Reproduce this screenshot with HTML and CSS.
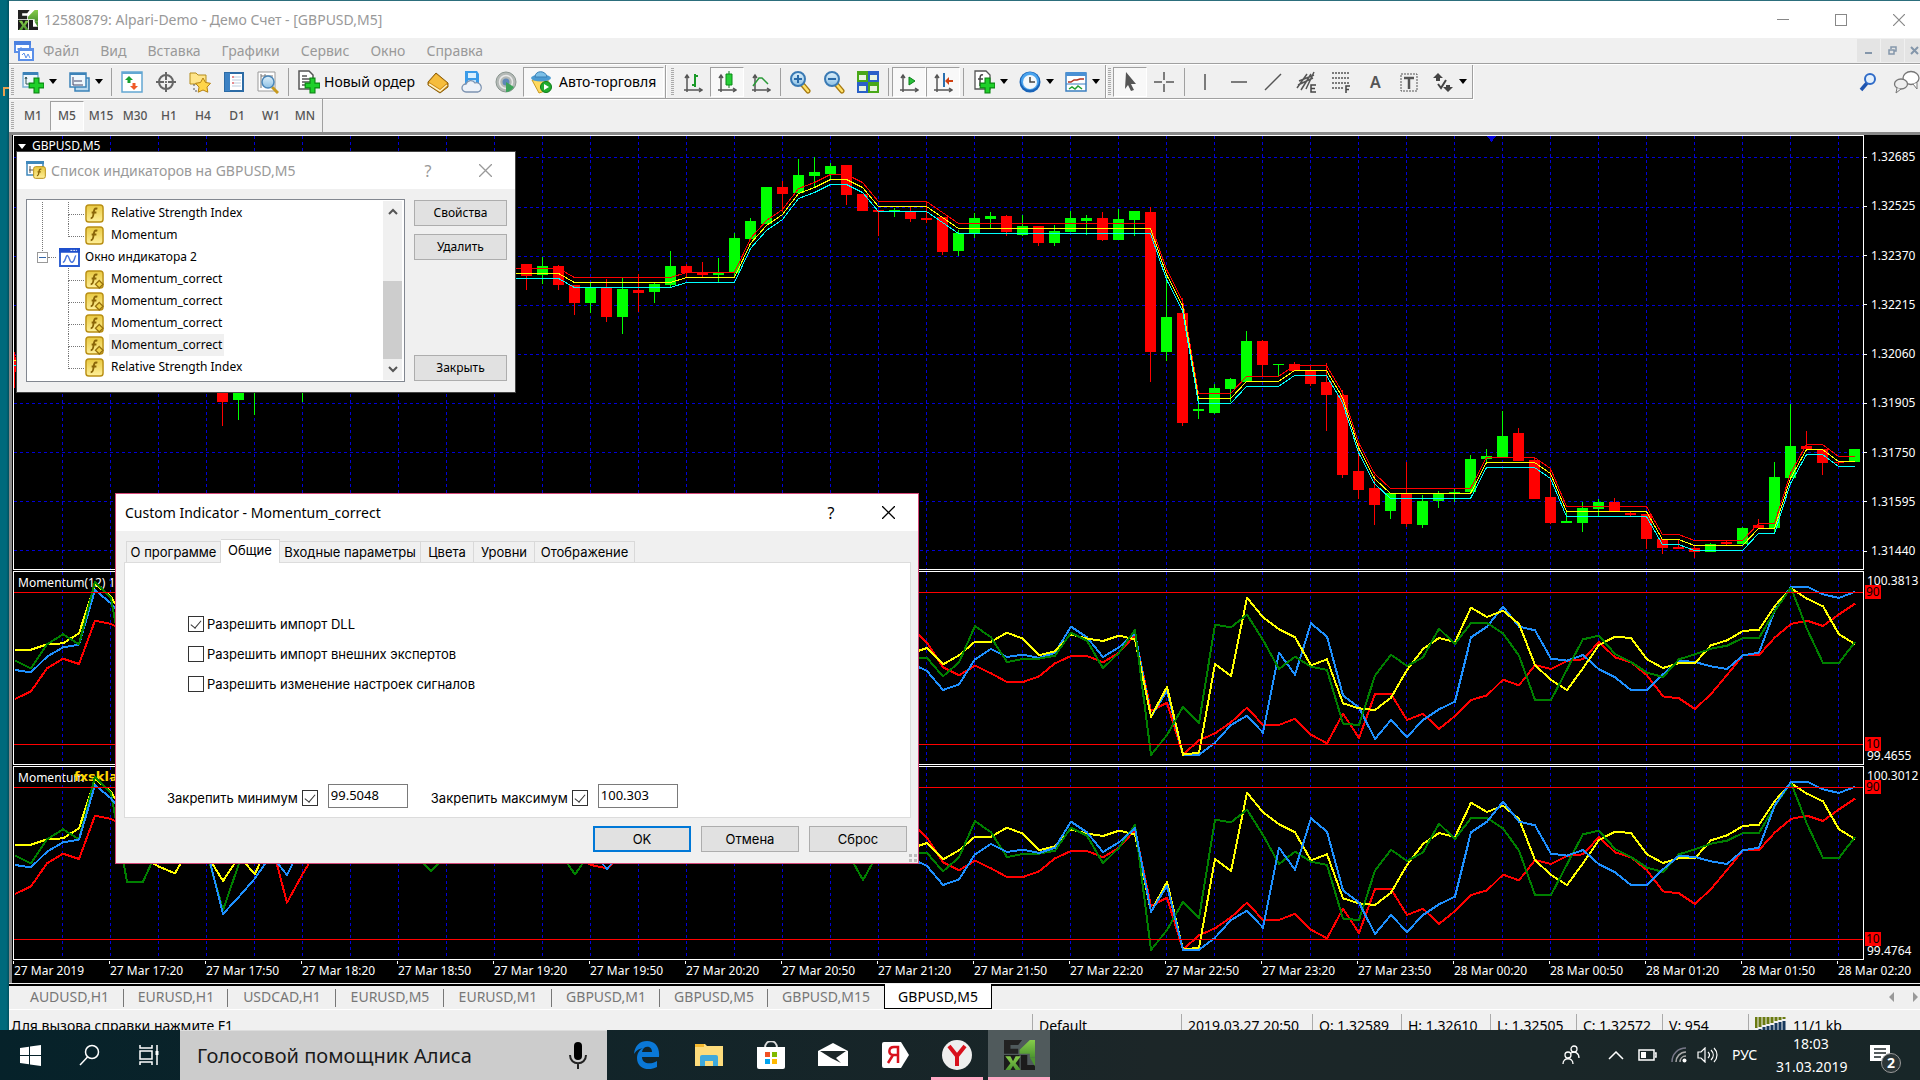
FILE: index.html
```html
<!DOCTYPE html>
<html lang="ru">
<head>
<meta charset="utf-8">
<title>12580879: Alpari-Demo - Демо Счет - [GBPUSD,M5]</title>
<link rel="stylesheet" href="styles.css">
</head>
<body>
<svg class="defs" aria-hidden="true">
  <linearGradient id="gold" x1="0" y1="0" x2="0" y2="1"><stop offset="0" stop-color="#e8c840"/><stop offset="1" stop-color="#fff09a"/></linearGradient>
  <linearGradient id="blue" x1="0" y1="0" x2="0" y2="1"><stop offset="0" stop-color="#dff1fb"/><stop offset="1" stop-color="#8cc0e4"/></linearGradient>
  <linearGradient id="leaf" x1="0" y1="0" x2="0" y2="1"><stop offset="0" stop-color="#86cc4a"/><stop offset="1" stop-color="#4c9430"/></linearGradient>
  <symbol id="plus" viewBox="0 0 14 14"><path d="M5 1h4v4h4v4H9v4H5V9H1V5h4z" fill="#1fd02a" stroke="#0a8a12"/></symbol>
  <symbol id="axes" viewBox="0 0 20 20"><path d="M4 3v14h15M1 17h3v2M2 5l2-3 2 3M16 15l3 2-3 2" fill="none" stroke="#555" stroke-width="1.5"/></symbol>
  <symbol id="f" viewBox="0 0 20 20"><rect x="1" y="1" width="18" height="18" rx="3" fill="url(#gold)" stroke="#b98f14" stroke-width="1.5"/><path d="M13 5c-3-1-3.500 1-4 5s-1 5-3 5M7 9h5" fill="none" stroke="#8a6508" stroke-width="2"/></symbol>
  <symbol id="fc" viewBox="0 0 20 20"><use href="#f"/><path d="M15 11l4 4-4 4-4-4z" fill="#f0d24a" stroke="#96700c" stroke-width="1.300"/></symbol>
  <symbol id="xl" viewBox="0 0 24 24" preserveAspectRatio="none"><path d="M0 0h14l-3 4H5v3h6v4H0z" fill="#222"/><path d="M0 12h12v12H0z" fill="#1b1b1b"/><path d="M20 0h4v14h-4v-3h-8V8z" fill="url(#leaf)"/><path d="M1 13h4l2 4 2-4h4l-4 5.500 4 5.500H9l-2-3.500L5 24H1l4-5.500z" fill="url(#leaf)"/><path d="M13 12h5v8h6v4H13z" fill="#1b1b1b"/><path d="M20 14h4v7z" fill="#4c9430"/></symbol>
  <symbol id="lens" viewBox="0 0 22 24"><path d="M13 14l6 7" stroke="#a87a10" stroke-width="5" stroke-linecap="round"/><path d="M14 15l5 6" stroke="#ffe26a" stroke-width="2.500" stroke-linecap="round"/><circle cx="9" cy="9" r="7" fill="url(#blue)" stroke="#3a7ab4" stroke-width="2"/></symbol>
  <symbol id="close" viewBox="0 0 12 12"><path d="M0 0l12 12M12 0L0 12" fill="none" stroke="currentColor" stroke-width="1.200"/></symbol>
</svg>

<div class="screen">
  <aside class="desktop"><svg width="6" height="9" viewBox="0 0 6 9"><path d="M1 9V1h5" fill="none" stroke="#e8a050" stroke-width="2"/></svg></aside>
  <div class="window">
    <header class="titlebar">
      <svg class="i-app"><use href="#xl"/></svg>
      <h1>12580879: Alpari-Demo - Демо Счет - [GBPUSD,M5]</h1>
      <div class="win-controls">
        <button aria-label="Свернуть"><svg width="12" height="12"><path d="M0 5.500h12" stroke="#888"/></svg></button>
        <button aria-label="Развернуть"><svg width="12" height="12"><rect x=".5" y=".5" width="11" height="11" fill="none" stroke="#888"/></svg></button>
        <button aria-label="Закрыть"><svg width="12" height="12"><use href="#close"/></svg></button>
      </div>
    </header>

    <nav class="menubar">
      <svg width="20" height="20" viewBox="0 0 20 20"><path d="M1 1h15v10H1z" fill="#fff" stroke="#5b8fe8" stroke-width="2"/><path d="M0 0h17v4H0z" fill="#4a80e0"/><path d="M4 7v2m3-3v3m3-2v2" stroke="#5b8fe8"/><path d="M5 8h14v11H5z" fill="#fff" stroke="#5b8fe8" stroke-width="2"/><path d="M4 7h16v3H4z" fill="#5b8fe8"/><path d="M8 14l2-2 2 5 2-4 2 4" fill="none" stroke="#5b8fe8"/></svg>
      <a href="#">Файл</a><a href="#">Вид</a><a href="#">Вставка</a><a href="#">Графики</a><a href="#">Сервис</a><a href="#">Окно</a><a href="#">Справка</a>
      <div class="mdi">
        <button aria-label="Свернуть график"><svg width="9" height="9"><path d="M1 7h7" stroke="#8496aa" stroke-width="2"/></svg></button>
        <button aria-label="Восстановить график"><svg width="9" height="9"><path d="M3 3V1h5v4H6M1 4h5v4H1z" fill="none" stroke="#8496aa" stroke-width="1.500"/></svg></button>
        <button aria-label="Закрыть график"><svg width="9" height="9"><path d="M1 1l7 7M8 1L1 8" stroke="#8496aa" stroke-width="2"/></svg></button>
      </div>
    </nav>

    <div class="toolbar">
      <div class="group">
        <span class="grip"></span>
        <button class="dd" aria-label="Новый график"><svg class="ic" viewBox="0 0 22 24"><path d="M1 3h15v14H1z" fill="#eef6fc" stroke="#7fb2d6" stroke-width="1.500"/><path d="M1 2h15v3H1z" fill="#3b82b8"/><path d="M4 7v7h8M3 9l1-2 1 2" fill="none" stroke="#355"/><use href="#plus" x="6" y="7" width="17" height="17"/></svg><i></i></button>
        <button class="dd" aria-label="Профили"><svg class="ic" viewBox="0 0 22 24"><path d="M7 8h14v13H7z" fill="#b9d8ee" stroke="#3b82b8" stroke-width="1.500"/><path d="M2 3h16v14H2z" fill="#eef6fc" stroke="#3b82b8" stroke-width="1.500"/><path d="M2 3h16v2H2z" fill="#3b82b8"/><path d="M5 7v8h10M6 11h8" fill="none" stroke="#446"/></svg><i></i></button>
        <span class="sep"></span>
        <button aria-label="Обзор рынка"><svg class="ic" viewBox="0 0 22 24"><rect x="1" y="2" width="20" height="20" fill="#fff" stroke="#63a7d2" stroke-width="1.500"/><path d="M1 2h20v2H1z" fill="#63a7d2"/><path d="M8 6l4 4H9.500v3h-3v-3H4z" fill="#18a030"/><path d="M13 20l4-4h-2.500v-3h-3v3H9z" fill="#f05a28"/></svg></button>
        <button aria-label="Навигатор"><svg class="ic" viewBox="0 0 22 24"><circle cx="11" cy="12" r="7" fill="none" stroke="#666" stroke-width="2"/><path d="M11 2v8m0 4v8M1 12h8m4 0h8" stroke="#666" stroke-width="2"/><circle cx="11" cy="12" r="1" fill="#555"/></svg></button>
        <button aria-label="Избранное"><svg class="ic" viewBox="0 0 22 24"><path d="M1 3h6l2 2h8v9H1z" fill="#ffe58a" stroke="#b58d1c"/><path d="M5 14v7h4" fill="none" stroke="#555" stroke-dasharray="2 2"/><path d="M14 8l2.500 4.500 5 .8-3.500 3.800.8 5.100L14 20l-4.800 2.200.8-5.100-3.500-3.800 5-.8z" fill="#ffd54a" stroke="#b58213"/></svg></button>
        <button aria-label="Терминал"><svg class="ic" viewBox="0 0 22 24"><rect x="2" y="3" width="18" height="18" fill="#fff" stroke="#2c6ba5" stroke-width="2"/><path d="M2 3h5v18H2z" fill="#3d82c4"/><path d="M9 7h9M9 10h9M9 13h9M9 16h9" stroke="#bcd"/><path d="M9 7h2M9 13h2" stroke="#e33"/></svg></button>
        <button aria-label="Тестер"><svg class="ic" viewBox="0 0 22 24"><path d="M1 2h17v19H1z" fill="#fff" stroke="#999"/><path d="M4 4v14M4 6h12M8 4v6" stroke="#777"/><path d="M15 17l6 6" stroke="#c79a20" stroke-width="3"/><circle cx="11" cy="12" r="6" fill="url(#blue)" stroke="#4a86b8" stroke-width="1.500"/></svg></button>
        <span class="sep"></span>
        <button class="wide"><svg class="ic" viewBox="0 0 22 24"><path d="M1 1h10l4 4v14H1z" fill="#fff" stroke="#555" stroke-width="1.500"/><path d="M4 6h5M4 9h8M4 12h8M4 15h4" stroke="#555" stroke-width="1.500"/><use href="#plus" x="6" y="7" width="17" height="17"/></svg>Новый ордер</button>
        <button aria-label="MetaEditor"><svg class="ic" viewBox="0 0 22 24"><path d="M1 12L9 3l12 10v4l-8 6L1 15z" fill="#c98612" stroke="#8a5e0c"/><path d="M9 4l11 9-7 6L2 12z" fill="#f6bd3c"/><path d="M2 14l11 7 7-6" fill="none" stroke="#fff3c4" stroke-width="1.500"/></svg></button>
        <button aria-label="Облако"><svg class="ic" viewBox="0 0 22 24"><path d="M4 1h12l2 3v11H4z" fill="#3a9be8"/><path d="M7 3h8v5H7z" fill="#d9f0ff"/><path d="M7 10h8v5H7z" fill="#bfe2fa"/><path d="M5 22a4 4 0 010-8 5 5 0 019-1 4 4 0 013 9z" fill="#eef2f8" stroke="#7d93b0" stroke-width="1.300"/></svg></button>
        <button aria-label="Сигналы"><svg class="ic" viewBox="0 0 22 24"><circle cx="11" cy="12" r="10" fill="#b4b9b6" stroke="#8a9690"/><circle cx="11" cy="12" r="6.500" fill="none" stroke="#e8e8e8" stroke-width="1.500"/><circle cx="11" cy="12" r="3.500" fill="#5f88b8"/><path d="M11 12v10a10 10 0 008-5" fill="#3da35a"/></svg></button>
        <button class="wide on"><svg class="ic" viewBox="0 0 22 24"><path d="M2 10l7 13 9-3V9z" fill="#ffd95e" stroke="#c89a20"/><ellipse cx="11" cy="8" rx="10" ry="3.500" fill="#4b9bd2"/><path d="M5 7c0-7 11-7 12 0z" fill="#7cc0e8" stroke="#3a80b4"/><circle cx="16" cy="17" r="5.500" fill="#21ad2e" stroke="#0c7a18"/><path d="M14 14l5 3-5 3z" fill="#fff"/></svg>Авто-торговля</button>
      </div>
      <div class="group">
        <span class="grip"></span>
        <button aria-label="Бары"><svg class="ic" viewBox="0 0 22 24"><use href="#axes" x="1" y="3" width="20" height="20"/><path d="M13 4v13M13 6h3M10 15h3" stroke="#1a9a28" stroke-width="2"/></svg></button>
        <button class="on" aria-label="Свечи"><svg class="ic" viewBox="0 0 22 24"><use href="#axes" x="1" y="3" width="20" height="20"/><path d="M13 1v17" stroke="#0a7a18"/><path d="M10 4h6v11h-6z" fill="#28d038" stroke="#0a8a18"/></svg></button>
        <button aria-label="Линия"><svg class="ic" viewBox="0 0 22 24"><use href="#axes" x="1" y="3" width="20" height="20"/><path d="M3 16l6-8h3l6 6" fill="none" stroke="#2a9a38" stroke-width="1.500"/></svg></button>
        <span class="sep slim"></span>
        <button aria-label="Приблизить"><svg class="ic" viewBox="0 0 22 24"><use href="#lens"/><path d="M9 5v8M5 9h8" stroke="#2a6aa8" stroke-width="2"/></svg></button>
        <button aria-label="Отдалить"><svg class="ic" viewBox="0 0 22 24"><use href="#lens"/><path d="M5 9h8" stroke="#2a6aa8" stroke-width="2"/></svg></button>
        <button aria-label="Плитка"><svg class="ic" viewBox="0 0 22 24"><path d="M0 1h11v11H0zM11 12h11v11H11z" fill="#49a818"/><path d="M11 1h11v11H11zM0 12h11v11H0z" fill="#2a60c8"/><path d="M2 5h7v5H2zM13 5h7v5h-7zM2 16h7v5H2zM13 16h7v5h-7z" fill="#e8f4e0"/></svg></button>
        <span class="sep"></span>
        <button class="on" aria-label="Автопрокрутка"><svg class="ic" viewBox="0 0 22 24"><use href="#axes" x="1" y="3" width="20" height="20"/><path d="M11 7l6 4-6 4z" fill="#28c038" stroke="#0a8018"/></svg></button>
        <button class="on" aria-label="Сдвиг"><svg class="ic" viewBox="0 0 22 24"><use href="#axes" x="1" y="3" width="20" height="20"/><path d="M12 3v14" stroke="#2a70b0" stroke-width="2"/><path d="M13 11l4-4v3h4v2h-4v3z" fill="#d04010"/></svg></button>
        <span class="sep"></span>
        <button class="dd" aria-label="Индикаторы"><svg class="ic" viewBox="0 0 22 24"><path d="M2 1h11l4 4v14H2z" fill="#fff" stroke="#555" stroke-width="1.300"/><path d="M10 5c-3-1-3 2-3 5v6M5 9h5" fill="none" stroke="#444" stroke-width="1.500"/><use href="#plus" x="6" y="7" width="17" height="17"/></svg><i></i></button>
        <button class="dd" aria-label="Периоды"><svg class="ic" viewBox="0 0 22 24"><circle cx="11" cy="12" r="10.500" fill="#1a64b8"/><circle cx="11" cy="11" r="9" fill="#4aa4ee"/><circle cx="11" cy="12" r="7" fill="#f4f8fb"/><path d="M11 7v5h5" fill="none" stroke="#444" stroke-width="1.500"/></svg><i></i></button>
        <button class="dd" aria-label="Шаблоны"><svg class="ic" viewBox="0 0 22 24"><path d="M1 3h20v18H1z" fill="#fff" stroke="#3b7fc0" stroke-width="1.500"/><path d="M1 2h20v4H1z" fill="#4a90d4"/><path d="M3 12h3l3-2h3l3-1h4" fill="none" stroke="#b03020" stroke-width="1.500"/><path d="M1 14h20" stroke="#3b7fc0"/><path d="M4 19l3-2 3 2 3-3 4 3" fill="none" stroke="#20a030" stroke-width="1.500"/></svg><i></i></button>
      </div>
      <div class="group tight">
        <span class="grip"></span>
        <button class="on" aria-label="Курсор"><svg class="ic" viewBox="0 0 22 24"><path d="M7 2l10 12h-5l3 6-3 1-3-6-3 4z" fill="#555"/></svg></button>
        <button aria-label="Перекрестие"><svg class="ic" viewBox="0 0 22 24"><path d="M11 2v8m0 4v8M1 12h8m4 0h8" stroke="#555" stroke-width="1.500"/></svg></button>
        <span class="sep"></span>
        <button aria-label="Вертикальная линия"><svg class="ic" viewBox="0 0 22 24"><path d="M11 4v16" stroke="#555" stroke-width="1.500"/></svg></button>
        <button aria-label="Горизонтальная линия"><svg class="ic" viewBox="0 0 22 24"><path d="M3 12h16" stroke="#555" stroke-width="1.500"/></svg></button>
        <button aria-label="Трендовая линия"><svg class="ic" viewBox="0 0 22 24"><path d="M3 20L19 4" stroke="#555" stroke-width="1.500"/></svg></button>
        <button aria-label="Канал"><svg class="ic" viewBox="0 0 22 24"><path d="M1 18L11 4M5 20L15 4M10 19L18 2M2 15l15-7M3 11l15-6" stroke="#555" stroke-width="1.500"/><path d="M20 15h-5v7h5M15 18.500h4" fill="none" stroke="#444" stroke-width="1.500"/></svg></button>
        <button aria-label="Фибоначчи"><svg class="ic" viewBox="0 0 22 24"><path d="M2 3h17M2 8h17M2 13h17M2 18h11" stroke="#555" stroke-width="1.500" stroke-dasharray="2 1"/><path d="M20 16h-4v7M16 19.500h3" fill="none" stroke="#444" stroke-width="1.500"/></svg></button>
        <button aria-label="Текст" class="glyph">A</button>
        <button aria-label="Метка"><svg class="ic" viewBox="0 0 22 24"><rect x="3" y="4" width="16" height="17" fill="none" stroke="#555" stroke-dasharray="2 1"/><path d="M6 8h10M11 8v11" stroke="#555" stroke-width="2.500"/></svg></button>
        <button class="dd" aria-label="Стрелки"><svg class="ic" viewBox="0 0 22 24"><path d="M6 3l5 5H8v3H4V8H1zM16 22l-5-5h3v-2h4v2h3z" fill="#444"/><path d="M6 14l3 4 5-8" fill="none" stroke="#444" stroke-width="2"/></svg><i></i></button>
      </div>
      <div class="tools-right">
        <button aria-label="Поиск"><svg width="18" height="20" viewBox="0 0 18 20"><path d="M8 11l-6 7" stroke="#1f55b0" stroke-width="3.500"/><circle cx="11" cy="7" r="5" fill="#e4f0fc" stroke="#2f6bc8" stroke-width="2"/></svg></button>
        <button aria-label="Чат"><svg width="27" height="24" viewBox="0 0 27 24"><ellipse cx="18" cy="8" rx="8" ry="6.500" fill="#fff" stroke="#777" stroke-width="1.300"/><path d="M20 14l4 5v-6" fill="#fff" stroke="#777"/><ellipse cx="8" cy="14" rx="6.500" ry="5" fill="#eee" stroke="#777" stroke-width="1.300"/><path d="M4 18l-1 5 5-4" fill="#eee" stroke="#777"/></svg></button>
      </div>
    </div>

    <div class="timeframes">
      <span class="grip"></span>
      <button>M1</button><button class="on">M5</button><button>M15</button><button>M30</button><button>H1</button><button>H4</button><button>D1</button><button>W1</button><button>MN</button>
    </div>

    <main class="chart">
      <section class="pane"><svg id="price" viewBox="0 0 1849 433" preserveAspectRatio="none"></svg><span class="caption"><i></i>GBPUSD,M5</span></section>
      <div class="prices"><span>1.32685</span><span>1.32525</span><span>1.32370</span><span>1.32215</span><span>1.32060</span><span>1.31905</span><span>1.31750</span><span>1.31595</span><span>1.31440</span></div>
      <section class="pane"><span class="caption low">Momentum(12) 100.0702</span><svg id="osc1" viewBox="0 0 1849 192" preserveAspectRatio="none"></svg></section>
      <div class="scale"><span>100.3813</span><span>99.4655</span><b class="hi">90</b><b class="lo">10</b></div>
      <section class="pane"><span class="caption low">Momentum</span><strong class="mark">fxsklad</strong><svg id="osc2" viewBox="0 0 1849 192" preserveAspectRatio="none"></svg></section>
      <div class="scale"><span>100.3012</span><span>99.4764</span><b class="hi">90</b><b class="lo">10</b></div>
      <div class="dates"><span>27 Mar 2019</span><span>27 Mar 17:20</span><span>27 Mar 17:50</span><span>27 Mar 18:20</span><span>27 Mar 18:50</span><span>27 Mar 19:20</span><span>27 Mar 19:50</span><span>27 Mar 20:20</span><span>27 Mar 20:50</span><span>27 Mar 21:20</span><span>27 Mar 21:50</span><span>27 Mar 22:20</span><span>27 Mar 22:50</span><span>27 Mar 23:20</span><span>27 Mar 23:50</span><span>28 Mar 00:20</span><span>28 Mar 00:50</span><span>28 Mar 01:20</span><span>28 Mar 01:50</span><span>28 Mar 02:20</span></div>
    </main>

    <nav class="tabs">
      <a href="#">AUDUSD,H1</a><a href="#">EURUSD,H1</a><a href="#">USDCAD,H1</a><a href="#">EURUSD,M5</a><a href="#">EURUSD,M1</a><a href="#">GBPUSD,M1</a><a href="#">GBPUSD,M5</a><a href="#">GBPUSD,M15</a><a href="#" class="current">GBPUSD,M5</a>
      <svg class="scroll" width="32" height="12" viewBox="0 0 32 12"><path d="M6 1v10L1 6zM25 1v10l5-5z" fill="#999"/></svg>
    </nav>

    <footer class="status">
      <span class="hint">Для вызова справки нажмите F1</span><span class="c-profile">Default</span><span class="c-date">2019.03.27 20:50</span><span class="c-price">O: 1.32589</span><span class="c-price">H: 1.32610</span><span class="c-close">L: 1.32505</span><span class="c-close">C: 1.32572</span><span class="c-close">V: 954</span>
      <span class="c-net"><svg width="32" height="16" viewBox="0 0 32 16"><path d="M1 0v11M5 0v10M9 0v8M13 0v7M17 0v6M21 0v4M25 0v3M29 0v2" stroke="#6a7a10" stroke-width="3"/><path d="M1 13v3M5 12v4M9 10v6M13 9v7M17 8v8M21 6v10M25 5v11M29 4v12" stroke="#17385c" stroke-width="3"/></svg>11/1 kb</span>
    </footer>
  </div>
</div>

<footer class="taskbar">
  <button class="tb" aria-label="Пуск"><svg width="21" height="21" viewBox="0 0 21 21"><path d="M0 3l9-1.300V10H0zM10 1.500L21 0v10H10zM0 11h9v8.300L0 18zM10 11h11v10l-11-1.500z" fill="#fff"/></svg></button>
  <button class="tb" aria-label="Найти"><svg width="22" height="22" viewBox="0 0 22 22"><circle cx="13" cy="8" r="6.500" fill="none" stroke="#fff" stroke-width="1.500"/><path d="M8.500 13L1 21" stroke="#fff" stroke-width="1.500"/></svg></button>
  <button class="tb" aria-label="Представление задач"><svg width="22" height="20" viewBox="0 0 22 20"><path d="M1 0v3h12V0M1 6h12v8H1zM1 20v-3h12v3M18 0v20" fill="none" stroke="#fff" stroke-width="1.500"/><path d="M16.500 6h3v4h-3z" fill="#fff"/></svg></button>
  <label class="alice"><input type="text" aria-label="Алиса" value="Голосовой помощник Алиса"><svg width="18" height="28" viewBox="0 0 18 28"><rect x="5" y="0" width="8" height="18" rx="4" fill="#000"/><path d="M1 13c0 11 16 11 16 0M9 21v6" fill="none" stroke="#222" stroke-width="2"/></svg></label>
  <div class="apps">
    <button class="tb" aria-label="Edge"><svg width="26" height="28" viewBox="0 0 26 28"><path d="M0 13C1 4 6 0 13 0c8 0 13 6 12 16H8c0 7 9 8 15 4v6C13 31 3 27 3 17c0-4 2-8 6-10-5 1-7 3-9 6zm8-2h10c0-7-9-7-10 0z" fill="#0a78d7"/></svg></button>
    <button class="tb" aria-label="Проводник"><svg width="28" height="24" viewBox="0 0 28 24"><path d="M0 1h10l2 2h16v20H0z" fill="#fddc7c"/><path d="M0 1h9v3H0z" fill="#f5b92e"/><path d="M5 23v-9q0-2 2-2h14q2 0 2 2v9h-5v-5h-8v5z" fill="#3fa9dc"/></svg></button>
    <button class="tb" aria-label="Магазин"><svg width="30" height="28" viewBox="0 0 30 28"><path d="M9 7C9-2 21-2 21 7" fill="none" stroke="#ddd" stroke-width="2"/><path d="M1 6h28v20q0 2-2 2H3q-2 0-2-2z" fill="#fff"/><path d="M9 11h5v5H9z" fill="#f25022"/><path d="M16 11h5v5h-5z" fill="#7fba00"/><path d="M9 18h5v5H9z" fill="#00a4ef"/><path d="M16 18h5v5h-5z" fill="#ffb900"/></svg></button>
    <button class="tb" aria-label="Почта"><svg width="30" height="24" viewBox="0 0 30 24"><path d="M0 8L15 0l15 8v15H0z" fill="#fff"/><path d="M2 8h26L18 15l5 5-10-5z" fill="#1c2628"/></svg></button>
    <button class="tb" aria-label="Яндекс"><svg width="27" height="26" viewBox="0 0 27 26"><path d="M2 0h17l8 13-8 13H2q-2 0-2-2V2q0-2 2-2z" fill="#fff"/><path d="M16 21V5h-4c-6 0-6 8-1 8h4M11 13l-5 8" fill="none" stroke="#d8101c" stroke-width="2.500"/></svg></button>
    <button class="tb run" aria-label="Яндекс.Браузер"><svg width="30" height="30" viewBox="0 0 30 30"><circle cx="15" cy="15" r="15" fill="#eee"/><path d="M7 6l8 10 8-10M15 15v11" fill="none" stroke="#d8101c" stroke-width="4"/></svg></button>
    <button class="tb run active" aria-label="MetaTrader"><svg width="31" height="30"><use href="#xl"/></svg></button>
  </div>
  <div class="tray">
    <svg width="18" height="20" viewBox="0 0 18 20"><circle cx="12" cy="4" r="3" fill="none" stroke="#fff" stroke-width="1.300"/><circle cx="6" cy="10" r="3" fill="none" stroke="#fff" stroke-width="1.300"/><path d="M1 19c0-7 10-7 10 0M9 8c4-2 8 0 8 5" fill="none" stroke="#fff" stroke-width="1.300"/></svg>
    <svg width="16" height="9" viewBox="0 0 16 9"><path d="M1 8l7-7 7 7" fill="none" stroke="#fff" stroke-width="1.500"/></svg>
    <svg width="19" height="12" viewBox="0 0 19 12"><path d="M1 1h15v10H1zM17 4h1v4h-1" fill="none" stroke="#fff" stroke-width="1.500"/><path d="M3 3h5v6H3z" fill="#fff"/></svg>
    <svg width="16" height="16" viewBox="0 0 16 16"><path d="M1 15C1 7 7 1 15 1" fill="none" stroke="#778" stroke-width="1.500"/><path d="M5 15c0-5 4-10 10-10M9 15c0-3 2-6 6-6" fill="none" stroke="#aaa" stroke-width="1.500"/><circle cx="13.500" cy="13.500" r="2" fill="#fff"/></svg>
    <svg width="21" height="16" viewBox="0 0 21 16"><path d="M1 5h3l4-4v14l-4-4H1zM11 5c2 2 2 4 0 6M14 3c3 3 3 7 0 10M17 1c4 4 4 10 0 14" fill="none" stroke="#fff" stroke-width="1.200"/></svg>
    <span>РУС</span>
    <time>18:03<br>31.03.2019</time>
    <button class="notify" aria-label="Уведомления"><svg width="20" height="20" viewBox="0 0 20 20"><path d="M0 0h20v16h-4v4l-4-4H0z" fill="#fff"/><path d="M4 4h12M4 8h12M4 12h7" stroke="#1c2628" stroke-width="1.500"/></svg><b>2</b></button>
  </div>
</footer>

<section class="dialog indicators" aria-label="Список индикаторов">
  <header>
    <svg width="20" height="19" viewBox="0 0 20 19"><path d="M1 1h16v13H1z" fill="#fff" stroke="#3f88bc" stroke-width="1.500"/><path d="M0 0h18v3H0z" fill="#3f88bc"/><path d="M4 5v7M3 9h4" stroke="#555"/><use href="#f" x="7" y="5" width="13" height="13"/></svg>
    <h2>Список индикаторов на GBPUSD,M5</h2>
    <button class="help" aria-label="Справка">?</button>
    <button class="x" aria-label="Закрыть"><svg width="13" height="13"><use href="#close"/></svg></button>
  </header>
  <div class="body">
    <div class="tree">
      <ul>
        <li class="leaf"><svg><use href="#f"/></svg><span>Relative Strength Index</span></li>
        <li class="leaf last"><svg><use href="#f"/></svg><span>Momentum</span></li>
        <li class="node"><em></em><svg viewBox="0 0 22 20"><path d="M1 1h20v18H1z" fill="#fff" stroke="#2a5cd0" stroke-width="2"/><path d="M0 0h22v5H0z" fill="#1e4fcc"/><path d="M12 2.500h7" stroke="#fff" stroke-dasharray="2 1"/><path d="M4 15c3 0 3-8 5-7s2 8 5 7 2-7 4-7" fill="none" stroke="#4a76dc" stroke-width="1.500"/></svg><span>Окно индикатора 2</span></li>
        <li class="leaf"><svg><use href="#fc"/></svg><span>Momentum_correct</span></li>
        <li class="leaf"><svg><use href="#fc"/></svg><span>Momentum_correct</span></li>
        <li class="leaf"><svg><use href="#fc"/></svg><span>Momentum_correct</span></li>
        <li class="leaf sel"><svg><use href="#fc"/></svg><span>Momentum_correct</span></li>
        <li class="leaf last"><svg><use href="#f"/></svg><span>Relative Strength Index</span></li>
      </ul>
      <div class="scrollbar"><svg width="10" height="7"><path d="M1 6l4-4 4 4" fill="none" stroke="#555" stroke-width="2"/></svg><i></i><svg width="10" height="7"><path d="M1 1l4 4 4-4" fill="none" stroke="#555" stroke-width="2"/></svg></div>
    </div>
    <div class="actions"><button>Свойства</button><button>Удалить</button><button class="end">Закрыть</button></div>
  </div>
</section>

<form class="dialog custom" aria-label="Custom Indicator">
  <header>
    <h2>Custom Indicator - Momentum_correct</h2>
    <button type="button" class="help" aria-label="Справка">?</button>
    <button type="button" class="x" aria-label="Закрыть"><svg width="13" height="13"><use href="#close"/></svg></button>
  </header>
  <div class="body">
    <div class="tabset"><button type="button">О программе</button><button type="button" class="current">Общие</button><button type="button">Входные параметры</button><button type="button">Цвета</button><button type="button">Уровни</button><button type="button">Отображение</button></div>
    <div class="panel">
      <label><input type="checkbox" checked>Разрешить импорт DLL</label>
      <label><input type="checkbox">Разрешить импорт внешних экспертов</label>
      <label><input type="checkbox">Разрешить изменение настроек сигналов</label>
      <div class="limits">
        <label>Закрепить минимум<input type="checkbox" checked></label><input type="text" aria-label="Минимум" value="99.5048">
        <label>Закрепить максимум<input type="checkbox" checked></label><input type="text" aria-label="Максимум" value="100.303">
      </div>
    </div>
    <div class="buttons"><button type="button" class="ok">OK</button><button type="button">Отмена</button><button type="button">Сброс</button></div>
  </div>
  <svg class="resize" width="8" height="8"><path d="M0 0h3v3H0zM5 0h3v3H5zM0 5h3v3H0zM5 5h3v3H5z" fill="#bbb"/></svg>
</form>
<script src="chart.js"></script>
</body>
</html>
```
FILE: styles.css
```css
* { box-sizing: border-box; }
body { margin: 0; height: 100vh; display: flex; flex-direction: column; overflow: hidden; position: relative; background: #006a7c; font: 14px/20px "Noto Sans", "Open Sans", sans-serif; color: #000; }
button { font: inherit; color: inherit; background: none; border: 0; padding: 0; margin: 0; }
a { color: inherit; text-decoration: none; }
h1, h2 { margin: 0; font-size: 14px; font-weight: 400; }
svg { display: block; flex: none; }
.defs { position: absolute; width: 0; height: 0; }

.screen { flex: 1; min-height: 0; display: flex; }
.desktop { width: 9px; padding: 87px 0 0 3px; background: linear-gradient(90deg, #006a7c 70%, #00505e); }
.window { flex: 1; min-width: 0; display: flex; flex-direction: column; background: #f0f0f0; border-top: 1px solid #2c6e7c; }

.titlebar { height: 37px; flex: none; display: flex; align-items: center; padding-left: 9px; background: #fff; color: #999; }
.i-app { width: 20px; height: 20px; margin-right: 6px; }
.win-controls { margin-left: auto; display: flex; margin-right: -8px; color: #888; }
.win-controls button { width: 58px; height: 37px; display: grid; place-items: center; }

.menubar { height: 26px; flex: none; display: flex; align-items: center; gap: 21px; padding-left: 5px; border-bottom: 1px solid #a0a0a0; color: #999; }
.menubar > svg { margin-right: -12px; }
.mdi { margin-left: auto; display: flex; gap: 1px; align-self: stretch; padding: 1px 0; }
.mdi button { width: 23px; background: #e4e4e4; display: grid; place-items: center; }
.mdi button:last-child { width: 15px; padding-left: 4px; overflow: hidden; }

.toolbar { height: 35px; flex: none; display: flex; border-top: 1px solid #fff; }
.group { display: flex; align-items: center; padding: 0 1px; border-right: 1px solid #a0a0a0; border-bottom: 1px solid #a0a0a0; box-shadow: 1px 1px #fff; }
.group + .group { padding-left: 4px; padding-right: 0; }
.group + .tight { padding-left: 1px; }
.grip { width: 3px; height: 28px; margin: 0 2px 0 1px; background: repeating-linear-gradient(#aaa 0 1px, #f0f0f0 1px 2px); }
.group button { width: 34px; height: 30px; display: flex; align-items: center; justify-content: center; }
.group button.dd { width: 46px; gap: 5px; }
.group button.wide { width: auto; padding: 0 6px; gap: 4px; }
.group button.wide.on { padding: 0 7px 0 6px; gap: 7px; }
.group button.on, .timeframes .on { background: #f8f8f8; border: 1px solid #fff; border-top-color: #a0a0a0; border-left-color: #a0a0a0; }
.ic { width: 22px; height: 24px; }
.dd i { width: 0; height: 0; border: 4px solid transparent; border-top: 5px solid #000; border-bottom: 0; }
.sep { width: 1px; height: 28px; margin: 0 3px; background: #a0a0a0; }
.sep.slim { margin: 0 2px; }
.group .glyph { font-size: 16px; font-weight: 600; color: #555; }
.tools-right { margin-left: auto; display: flex; align-items: center; gap: 16px; }

.timeframes { height: 33px; flex: none; display: flex; align-items: center; width: 314px; padding-left: 1px; border-right: 1px solid #a0a0a0; font-size: 12px; font-weight: 500; color: #555; }
.timeframes button { width: 34px; height: 30px; flex: none; }

.chart { flex: 1; min-height: 0; display: grid; grid-template-columns: minmax(0, 1fr) 56px; grid-template-rows: 435fr 194fr 194fr 22px; row-gap: 1px; padding-left: 1px; background: #000; border: solid #888; border-width: 3px 0 0 3px; color: #fff; font-size: 12px; line-height: 18px; }
.pane { position: relative; min-height: 0; border: 1px solid #fff; overflow: hidden; }
.pane svg { width: 100%; height: 100%; position: relative; shape-rendering: crispEdges; }
.caption { position: absolute; left: 4px; top: 1px; display: flex; align-items: center; gap: 6px; }
.caption.low { top: 2px; }
.caption i { border: 4px solid transparent; border-top: 5px solid #fff; border-bottom: 0; }
.mark { position: absolute; left: 60px; top: 1px; font: bold 13px/18px "DejaVu Sans", sans-serif; color: #ffd700; }
.prices { display: flex; flex-direction: column; justify-content: space-between; padding: 13px 0 10px; }
.prices span { display: flex; align-items: center; gap: 4px; }
.prices span::before { content: ""; width: 3px; height: 1px; background: #fff; }
.scale { position: relative; display: flex; flex-direction: column; justify-content: space-between; padding: 1px 0 0 3px; overflow: hidden; }
.scale b { position: absolute; left: 1px; padding: 0 1px; background: #f00; color: #000; font-weight: 400; line-height: 14px; }
.hi { top: 7%; }
.lo { bottom: 7%; }
.dates { grid-column: 1 / -1; display: flex; overflow: hidden; }
.dates span { flex: 0 0 96px; height: 3px; border-left: 1px solid #fff; line-height: 20px; white-space: nowrap; }

.tabs { height: 26px; flex: none; margin-top: 1px; display: flex; border-top: 2px solid #000; border-bottom: 1px solid #fff; color: #777; font-size: 14px; line-height: 22px; }
.tabs a { width: 108px; text-align: center; background: linear-gradient(#777, #777) right center / 1px 18px no-repeat; }
.tabs a:first-child { width: 115px; padding-left: 6px; }
.tabs a:nth-child(2) { width: 104px; }
.tabs a:nth-child(8) { width: 116px; background: none; }
.tabs a.current { width: 108px; margin-top: -2px; padding-top: 2px; background: #fff; color: #000; border: solid #000; border-width: 0 1px 1px; }
.scroll { margin: 5px 0 0 auto; }

.status { height: 20px; flex: none; display: flex; padding-top: 4px; overflow: hidden; line-height: 24px; }
.status span { padding-left: 6px; border-left: 1px solid #aaa; white-space: nowrap; }
.status .hint { flex: 1; padding-left: 2px; border: 0; }
.c-profile { width: 149px; }
.c-date { width: 131px; }
.c-price { width: 89px; }
.c-close { width: 86px; }
.c-net { width: 172px; display: flex; gap: 6px; }
.c-net svg { margin-top: 3px; }

.taskbar { height: 50px; flex: none; display: flex; background: linear-gradient(90deg, #06222a, #1c2628 60%, #182628); color: #fff; }
.tb { width: 60px; display: grid; place-items: center; }
.alice { width: 427px; display: flex; align-items: center; padding: 0 20px 0 17px; background: #ccc; border-top: 1px solid #ddd; }
.alice input { flex: 1; min-width: 0; border: 0; padding: 0; background: none; font: 20px/26px "Noto Sans", sans-serif; color: #1a1a1a; }
.apps { display: flex; margin-left: 9px; }
.apps .tb { width: 62px; }
.apps .run { box-shadow: inset 0 -3px #ffa8c4; width: 52px; margin-left: 5px; }
.apps .active { width: 62px; background: #505a5c; }
.tray { margin-left: auto; display: flex; align-items: center; }
.tray svg { margin-right: 14px; }
.tray svg:nth-child(1) { margin-right: 28px; }
.tray svg:nth-child(4) { margin-right: 10px; }
.tray span { width: 44px; }
.tray time { width: 70px; text-align: center; font-size: 14px; line-height: 23px; }
.notify { position: relative; margin-left: 24px; width: 50px; }
.tray .notify svg { margin: 0; }
.notify b { position: absolute; left: 11px; top: 8px; width: 20px; height: 20px; border-radius: 50%; border: 1px solid #999; background: #2c3638; font-size: 14px; line-height: 18px; }

.dialog { position: absolute; display: flex; flex-direction: column; background: #f0f0f0; border: 1px solid #444; }
.dialog header { height: 37px; flex: none; display: flex; align-items: center; background: #fff; }
.dialog h2 { flex: 1; }
.dialog .help { width: 30px; font-size: 16px; }
.dialog .x { width: 30px; margin: 0 15px 0 27px; display: grid; place-items: center; }
.dialog .body { flex: 1; }
.indicators { left: 16px; top: 151px; width: 500px; height: 242px; font-size: 12px; line-height: 22px; }
.indicators header { padding-left: 9px; gap: 5px; color: #999; }
.indicators .x { margin-left: 22px; }
.indicators .body { display: flex; gap: 9px; padding: 10px 8px 10px 9px; }
.tree { flex: 1; display: flex; padding: 1px 2px 1px 1px; background: #fff; border: 1px solid #828790; }
.tree ul { flex: 1; margin: 0; padding: 1px 0 0; list-style: none; background: repeating-linear-gradient(#fff 0 1px, #777 1px 2px) 14px 0 / 1px 50px no-repeat; }
.tree li { height: 22px; display: flex; align-items: center; position: relative; }
.tree li svg { width: 19px; height: 19px; margin-right: 5px; }
.leaf { padding-left: 57px; }
.leaf::before { content: ""; position: absolute; left: 40px; top: 0; width: 15px; height: 12px; border: dotted #777; border-width: 0 0 1px 1px; }
.leaf:not(.last)::after { content: ""; position: absolute; left: 40px; top: 12px; height: 10px; border-left: 1px dotted #777; }
.tree .node { padding-left: 31px; }
.tree .node svg { width: 21px; height: 19px; }
.node::before { content: ""; position: absolute; left: 20px; top: 11px; width: 8px; border-top: 1px dotted #777; }
.node em { position: absolute; left: 9px; top: 6px; width: 11px; height: 11px; border: 1px solid #999; background: linear-gradient(#36a, #36a) center / 7px 1px no-repeat; }
.leaf span { padding: 0 2px; }
.sel span { background: #f0f0f0; }
.scrollbar { width: 19px; display: flex; flex-direction: column; align-items: center; padding: 7px 0; background: #f0f0f0; }
.scrollbar i { align-self: stretch; height: 78px; margin: auto 0 7px; background: #cdcdcd; }
.actions { width: 93px; display: flex; flex-direction: column; gap: 8px; padding: 1px 0; }
.actions button, .buttons button { height: 26px; background: #e1e1e1; border: 1px solid #adadad; }
.actions .end { margin-top: auto; }

.custom { left: 115px; top: 493px; width: 804px; height: 371px; border-color: #d64878; font: 13px/18px "Inter", "Noto Sans", sans-serif; }
.custom header { padding-left: 9px; font-family: "Noto Sans", sans-serif; }
.custom .body { padding: 8px 7px 0 8px; }
.tabset { display: grid; grid-template-columns: 95px 59px 141px 53px 61px 100px; align-items: end; padding-left: 2px; }
.tabset button { height: 21px; white-space: nowrap; border: 1px solid #d9d9d9; border-width: 1px 1px 0 0; }
.tabset button:first-child { border-left-width: 1px; }
.tabset .current { height: 24px; padding-bottom: 3px; margin-bottom: -1px; background: #fff; position: relative; }
.panel { height: 256px; display: flex; flex-direction: column; gap: 12px; padding: 52px 0 9px 63px; background: #fff; border: 1px solid #dcdcdc; }
.panel label { display: flex; align-items: center; gap: 3px; }
.panel [type=checkbox] { appearance: none; width: 16px; height: 16px; margin: 0; background: #fff; border: 1px solid #333; }
.panel [type=checkbox]:checked::before { content: ""; display: block; width: 5px; height: 9px; margin: 1px 0 0 4px; border: solid #333; border-width: 0 1px 1px 0; transform: rotate(40deg); }
.limits { display: flex; margin: auto 0 0 -21px; }
.panel .limits label { align-self: flex-end; height: 20px; gap: 4px; }
.limits [type=text] { width: 80px; height: 24px; margin: 0 23px 0 10px; padding: 0 2px 3px; border: 1px solid #7a7a7a; font: 13px/18px "Noto Sans", sans-serif; }
.buttons { display: flex; justify-content: flex-end; gap: 10px; padding: 8px 4px 0 0; }
.buttons button { width: 98px; }
.buttons .ok { border: 2px solid #0078d7; }
.resize { position: absolute; right: 1px; bottom: 1px; }
```
FILE: chart.js
```js
// Bars are 16px apart; candle rows are [bar, up, high, open/close top, bottom, low].
const STEP = 16, TOP = 136;
const candles = [
  [0,0,352,357,372,388],[13,0,380,380,402,426],[14,1,380,380,400,420],[15,1,380,385,390,415],[18,1,380,385,390,402],
  [31,0,260,260,264,264],[32,0,264,264,276,290],[33,1,257,266,275,284],[34,0,265,266,285,290],[35,0,285,285,303,315],
  [36,1,283,287,303,313],[37,0,279,287,317,322],[38,1,277,289,317,334],[39,0,274,290,293,312],[40,1,282,284,292,303],
  [41,1,251,266,285,287],[42,0,264,266,273,277],[43,0,262,272,275,277],[44,1,258,273,275,283],[45,1,233,238,273,277],
  [46,1,218,221,239,239],[47,1,187,187,224,224],[48,0,181,187,194,212],[49,1,159,175,193,193],[50,1,157,172,176,187],
  [51,1,163,166,174,179],[52,0,165,165,195,205],[53,0,194,194,211,211],[54,0,210,210,212,236],[55,1,208,210,211,217],
  [56,0,207,212,219,222],[57,0,202,218,220,223],[58,0,217,217,252,255],[59,1,230,233,251,256],[60,1,213,218,234,238],
  [61,1,212,216,219,228],[62,0,215,216,232,236],[63,1,215,226,235,236],[64,0,226,226,243,246],[65,1,225,231,243,246],
  [66,1,211,218,232,232],[67,1,215,218,221,235],[68,0,212,218,240,241],[69,1,209,219,240,240],[70,1,211,211,220,236],
  [71,0,207,212,352,382],[72,1,277,317,352,361],[73,0,298,313,423,426],[74,1,397,409,411,419],[75,1,384,388,413,414],
  [76,1,378,379,389,402],[77,1,331,341,382,382],[78,0,340,341,365,376],[79,1,364,364,365,376],[80,0,362,364,371,371],
  [81,0,366,370,384,386],[82,0,363,382,395,431],[83,0,390,395,475,478],[84,0,442,471,490,499],[85,0,475,488,505,525],
  [86,1,493,493,511,519],[87,0,462,493,524,527],[88,1,495,501,525,528],[89,1,491,493,501,508],[90,1,488,492,493,502],
  [91,1,455,459,492,492],[92,1,449,456,459,462],[93,1,411,436,457,457],[94,0,428,433,461,461],[95,0,458,460,499,499],
  [96,0,470,497,523,524],[97,1,510,521,523,523],[98,1,502,508,523,532],[99,1,499,502,509,516],[100,0,498,502,511,511],
  [101,0,511,513,515,516],[102,0,514,514,539,549],[103,0,539,539,548,554],[104,0,539,547,549,549],[105,0,545,548,552,558],
  [106,1,543,544,552,552],[107,0,540,542,544,545],[108,1,527,528,544,544],[109,0,519,525,528,528],[110,1,462,477,528,532],
  [111,1,404,446,478,478],[112,0,431,446,449,449],[113,0,449,449,463,475],[114,0,462,462,463,465],[115,1,449,449,462,462]
];
// Moving average knots [bar, y]
const average = [[0,360],[1,362],[30,273],[34,273],[35,282],[41,282],[42,277],[45,277],[46,243],[47,225],[48,214],[49,193],[50,187],
  [51,179],[52,179],[53,187],[54,206],[57,206],[58,217],[59,228],[71,228],[72,274],[73,305],[74,398],[76,398],[77,381],
  [79,381],[80,370],[82,370],[83,397],[84,447],[85,478],[86,493],[91,493],[92,462],[95,462],[96,473],[97,511],[102,511],
  [103,539],[104,539],[105,545],[108,545],[109,528],[110,528],[111,478],[112,449],[113,449],[114,461],[115,461]];

const n = v => v * STEP + .5;
const grid = (h, w, rows) => {
  let d = '';
  for (let i = 3; i < 116; i += 3) d += `M${n(i)} 0V${h}`;
  for (const y of rows) d += `M0 ${y - TOP + .5}H${w}`;
  return `<path d="${d}" stroke="#0000d8" stroke-dasharray="3 3" fill="none"/>`;
};
const line = (pts, color, w, dy = 0) =>
  `<polyline points="${pts.map(([k, y]) => `${k * STEP + w / 2},${y + dy}`).join(' ')}" fill="none" stroke="${color}" stroke-width="${w}" stroke-linejoin="round"/>`;

let out = grid(433, 1849, [157,207,256,305,354,403,452,501,550]);
for (const [k, up, hi, a, b, lo] of candles) {
  const c = up ? '#0f0' : '#f00', x = k * STEP;
  out += `<path d="M${x} ${hi - TOP}h1V${lo - TOP}h-1z M${x - 5} ${a - TOP}h11V${Math.max(b, a + 1) - TOP}h-11z" fill="${c}"/>`;
}
out += line(average, '#f00', 1, -TOP - 4.5) + line(average, '#ff0', 1, .5 - TOP) + line(average, '#0ff', 1, 5.5 - TOP);
out += '<path d="M1473 0h9l-4.500 6z" fill="#0000d8"/>';
document.getElementById('price').innerHTML = out;

// Oscillator readings from bar `start`, three units to a pixel.
const series = {
  red: { color: '#f00', runs: [[0, 417,394,325,296,312,182,192,215],[15, 250,260,443,355,275],[35, 300,330,340,300],
    [54, 180,170,200,248,322,346,317,340,366,366,349,310,288,288,307,278,225,453,428,584,541,520,487,443,495,495,476,524,550,461,534,402,402,480,461,507,468,420,406,359,376,315,327,303,298,246,292,307,346,409,415,447,402,345,286,285,232,192,182,198,163,131]] },
  blue: { color: '#1e90ff', runs: [[0, 330,337,290,262,254,90,130,190],[12, 285,477,425,370,300,360,265],[36, 290,341,290],
    [55, 290,310,333,390,373,298,267,291,284,294,278,200,232,291,262,220,470,393,584,584,548,495,467,518,278,344,190,230,406,443,537,480,531,480,448,425,232,200,140,200,211,296,302,285,328,352,390,390,343,302,306,319,327,286,278,150,80,80,103,114,95]] },
  yellow: { color: '#ff0', runs: [[0, 270,269,253,250,220,72,110,190],[8, 310,335,355,270,300,378,305,357,250],
    [55, 290,280,264,313,286,245,245,218,236,286,274,223,236,243,227,238,470,381,584,578,312,348,113,172,208,232,316,298,430,445,450,413,330,267,234,246,143,171,152,192,315,360,390,325,255,230,234,298,324,309,309,256,241,213,209,137,85,116,139,223,252]] },
  green: { color: '#008000', runs: [[0, 302,325,253,223,253,65,115,380,380,275],[12, 295,465,326,250],[25, 300,349,300],[34, 290,358,290],
    [52, 290,375,290,290,294,294,349,307,198,232,306,297,296,287,218,242,325,278,210,585,525,440,489,194,202,164,240,327,290,320,330,491,495,347,284,318,292,206,252,189,189,220,287,420,420,328,238,227,282,306,338,351,298,283,266,257,234,234,152,83,207,309,309,246]] }
};
const oscillator = (id, order) => {
  let s = grid(192, 0, []);
  for (const name of order)
    for (const [start, ...v] of series[name].runs)
      s += line(v.map((y, i) => [start + i, (y - 36) / 3]), series[name].color, 2);
  s += '<path d="M0 20.500H1849M0 172.500H1849" stroke="#f00"/>';
  document.getElementById(id).innerHTML = s;
};
oscillator('osc1', ['red', 'blue', 'yellow', 'green']);
oscillator('osc2', ['red', 'yellow', 'green', 'blue']);
```
